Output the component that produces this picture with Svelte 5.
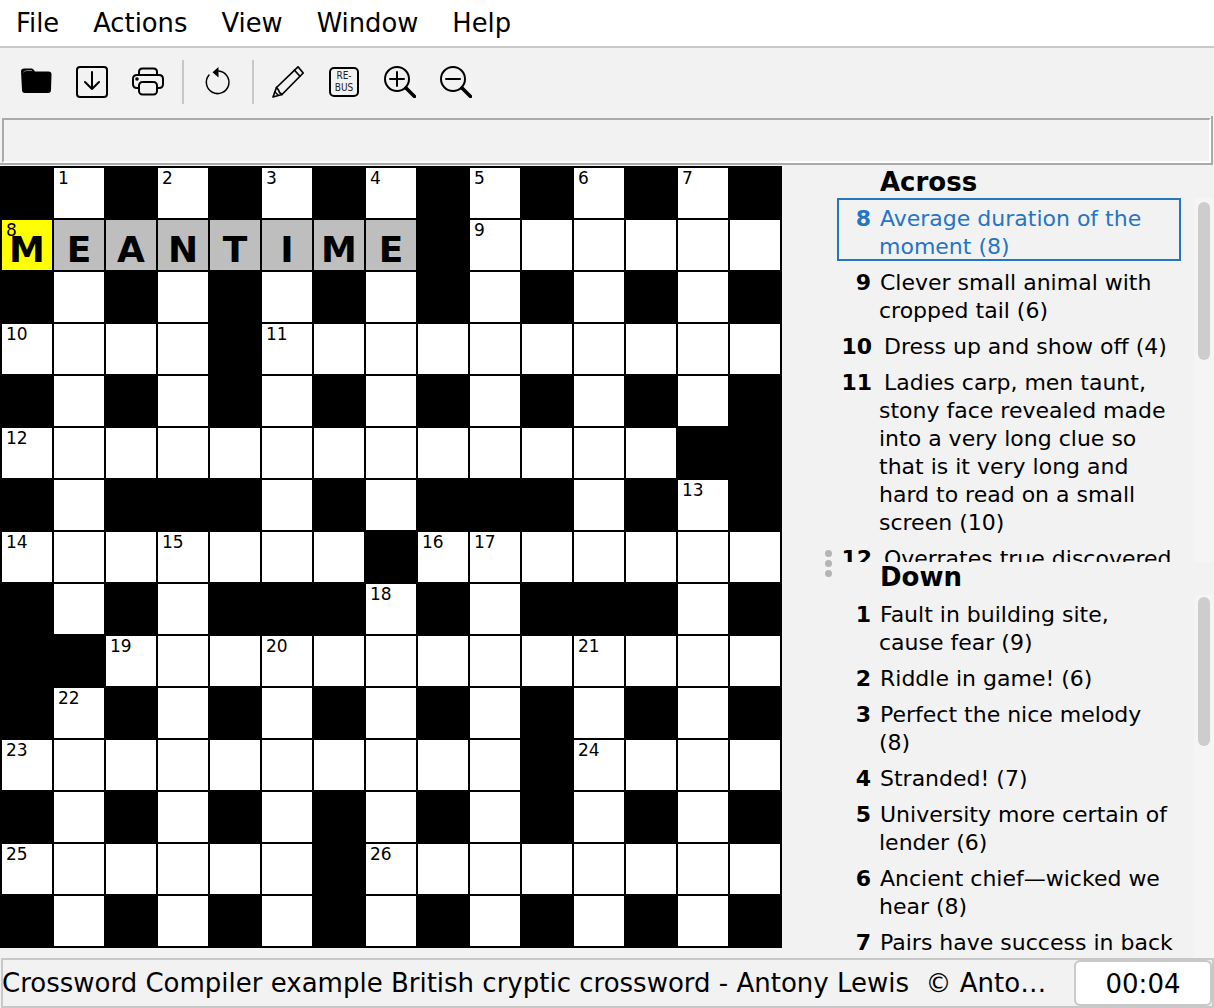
<script>
  const layout = [
    '#.#.#.#.#.#.#.#',
    '........#......',
    '#.#.#.#.#.#.#.#',
    '....#..........',
    '#.#.#.#.#.#.#.#',
    '.............##',
    '#.###.#.###.#.#',
    '.......#.......',
    '#.#.###.#.###.#',
    '##.............',
    '#.#.#.#.#.#.#.#',
    '..........#....',
    '#.#.#.#.#.#.#.#',
    '......#........',
    '#.#.#.#.#.#.#.#'
  ];
  const numbers = {
    '0,1': 1, '0,3': 2, '0,5': 3, '0,7': 4, '0,9': 5, '0,11': 6, '0,13': 7,
    '1,0': 8, '1,9': 9, '3,0': 10, '3,5': 11, '5,0': 12, '6,13': 13,
    '7,0': 14, '7,3': 15, '7,8': 16, '7,9': 17, '8,7': 18, '9,2': 19, '9,5': 20, '9,11': 21,
    '10,1': 22, '11,0': 23, '11,11': 24, '13,0': 25, '13,7': 26
  };
  const answer = 'MEANTIME';
  const cells = layout.flatMap((row, r) =>
    [...row].map((ch, c) => ({
      key: r + '-' + c,
      black: ch === '#',
      num: numbers[r + ',' + c],
      letter: r === 1 && c < 8 ? answer[c] : '',
      current: r === 1 && c === 0,
      word: r === 1 && c > 0 && c < 8
    }))
  );
  const across = [
    [8, 'Average duration of the moment (8)'],
    [9, 'Clever small animal with cropped tail (6)'],
    [10, 'Dress up and show off (4)'],
    [11, 'Ladies carp, men taunt, stony face revealed made into a very long clue so that is it very long and hard to read on a small screen (10)'],
    [12, 'Overrates true discovered in study (9)']
  ];
  const down = [
    [1, 'Fault in building site, cause fear (9)'],
    [2, 'Riddle in game! (6)'],
    [3, 'Perfect the nice melody (8)'],
    [4, 'Stranded! (7)'],
    [5, 'University more certain of lender (6)'],
    [6, 'Ancient chief—wicked we hear (8)'],
    [7, 'Pairs have success in back (5)']
  ];
</script>

<div class="app">
  <nav class="menubar">
    <span>File</span><span>Actions</span><span>View</span><span>Window</span><span>Help</span>
  </nav>

  <div class="toolbar">
    <button aria-label="Open">
      <svg viewBox="0 0 32 32" width="32" height="32"><path d="M1 5.500C1 3.500 2 2.500 4 2.500h7c1.500 0 2.200.6 3 1.600L15 5.500h13.500c2 0 3 1 3 3L31 24c0 2-1 3-3 3H5c-2 0-3-1-3-3z" fill="#000"/><path d="M3.500 6.200C5 4.800 6 4.600 8 4.600h4" stroke="#888" stroke-width="1" fill="none"/></svg>
    </button>
    <button aria-label="Save">
      <svg viewBox="0 0 32 32" width="32" height="32" class="line"><rect x="1" y="1" width="30" height="30" rx="3"/><path d="M16 6v17M9 16l7 7 7-7"/></svg>
    </button>
    <button aria-label="Print">
      <svg viewBox="0 0 32 32" width="32" height="32" class="line"><path d="M7 9V6c0-2 1.500-3.500 3.500-3.500h11C23.500 2.500 25 4 25 6v3"/><path d="M7 22H5c-2.500 0-4-1.500-4-4v-5c0-2.500 1.500-4 4-4h22c2.500 0 4 1.500 4 4v5c0 2.500-1.500 4-4 4h-2"/><rect x="7" y="16" width="18" height="12.500" rx="3.500"/><circle cx="5" cy="13" r=".8" fill="#000"/></svg>
    </button>
    <i class="sep"></i>
    <button aria-label="Undo">
      <svg viewBox="0 0 32 32" width="32" height="32" class="line thin"><path d="M16.500 5a11.300 11.300 0 1 1-9.500 4"/><path d="M16.500 1v10.500L10.500 6.200z" fill="#000" stroke="none"/></svg>
    </button>
    <i class="sep"></i>
    <button aria-label="Pencil">
      <svg viewBox="0 0 32 32" width="32" height="32" class="line slim"><path d="M1 31l3.500-9.500L26 .8 31.200 7 10 28.500z"/><path d="M22.500 4.200l5.500 6M4.500 21.500l2 2.500 1 2.500 2.500 2M3 26l3 3"/></svg>
    </button>
    <button class="rebus" aria-label="Rebus">
      <span>RE-<br />BUS</span>
    </button>
    <button aria-label="Zoom in">
      <svg viewBox="0 0 32 32" width="32" height="32" class="line"><circle cx="13" cy="13" r="12"/><path d="M6 13h14M13 6v14"/><path d="M22 22l8.500 8.500" stroke-width="3.500"/></svg>
    </button>
    <button aria-label="Zoom out">
      <svg viewBox="0 0 32 32" width="32" height="32" class="line"><circle cx="13" cy="13" r="12"/><path d="M6 13h14"/><path d="M22 22l8.500 8.500" stroke-width="3.500"/></svg>
    </button>
  </div>

  <div class="entry"><div class="entry-inner"></div></div>

  <main class="main">
    <div class="grid">
      {#each cells as cell (cell.key)}
        <div class="cell" class:black={cell.black} class:current={cell.current} class:word={cell.word}>
          {#if cell.num}<small>{cell.num}</small>{/if}
          {#if cell.letter}<b>{cell.letter}</b>{/if}
        </div>
      {/each}
    </div>

    <aside class="clues">
      <section class="pane top">
        <h2>Across</h2>
        <div class="list">
          {#each across as [n, text], i}
            <p class="clue" class:active={i === 0}><strong class:wide={n >= 10}>{n}</strong>{text}</p>
          {/each}
        </div>
        <div class="track"><i class="thumb"></i></div>
      </section>
      <div class="grip"><i></i><i></i><i></i></div>
      <section class="pane bottom">
        <h2>Down</h2>
        <div class="list">
          {#each down as [n, text]}
            <p class="clue"><strong class:wide={n >= 10}>{n}</strong>{text}</p>
          {/each}
        </div>
        <div class="track"><i class="thumb"></i></div>
      </section>
    </aside>
  </main>

  <footer class="status">
    <div class="title">Crossword Compiler example British cryptic crossword - Antony Lewis &nbsp;© Antony Lewis 2020</div>
    <div class="timer">00:04</div>
  </footer>
</div>

<style>
  :global(body) { margin: 0; background: #f2f2f2; }
  .app {
    width: 1214px; height: 1008px; overflow: hidden; display: flex; flex-direction: column;
    font-family: "DejaVu Sans", sans-serif; color: #000; background: #f2f2f2;
  }
  .menubar {
    height: 46px; background: #fff; border-bottom: 2px solid #c8c8c8; display: flex; gap: 34px;
    padding-left: 16px; font-size: 25.800px; line-height: 46px; flex: none;
  }
  .toolbar { height: 68px; display: flex; align-items: center; padding-left: 8px; flex: none; }
  button {
    width: 56px; height: 44px; border: 0; padding: 0; background: none; display: flex;
    align-items: center; justify-content: center; font-family: inherit; color: inherit;
  }
  .line { fill: none; stroke: #000; stroke-width: 2; stroke-linecap: round; stroke-linejoin: round; }
  .thin { stroke-width: 1.500; }
  .slim { stroke-width: 1.700; }
  .sep { width: 2px; height: 44px; background: #c8c8c8; margin: 0 6px; }
  .rebus span {
    width: 26px; height: 25px; border: 2px solid #000; border-radius: 5px; display: block;
    font-family: "DejaVu Sans Condensed", "DejaVu Sans", sans-serif;
    font-size: 10px; line-height: 12px; text-align: center; padding-top: 1px; box-sizing: content-box;
    color: #222;
  }
  .entry {
    width: 1213px; height: 49px; box-sizing: border-box; padding: 2px 0 0 2px; flex: none;
    border-right: 2px solid #aaa; border-bottom: 2px solid #aaa;
  }
  .entry-inner {
    height: 100%; box-sizing: border-box;
    border: 2px solid #fff; border-top-color: #aaa; border-left-color: #aaa;
  }
  .main { flex: none; height: 792px; display: flex; align-items: flex-start; margin-top: 1px; }
  .grid {
    width: 782px; height: 782px; box-sizing: border-box; padding: 2px; background: #000; display: grid;
    grid-template-columns: repeat(15, 50px); grid-template-rows: repeat(15, 50px); gap: 2px; flex: none;
  }
  .cell { background: #fff; position: relative; overflow: hidden; }
  .cell.black { background: #000; }
  .cell.current { background: #ff0; }
  .cell.word { background: #bebebe; }
  .cell small { position: absolute; left: 4px; top: 0; font-size: 17px; line-height: 20px; }
  .cell b { position: absolute; inset: 0; text-align: center; font-size: 36px; line-height: 60px; font-weight: 700; }
  .clues { flex: 1; display: flex; flex-direction: column; height: 792px; position: relative; }
  .pane { position: relative; overflow: hidden; font-size: 22px; }
  .pane.top { height: 396px; }
  .pane.bottom { height: 396px; }
  h2 { margin: 0; font-size: 26px; font-weight: 700; line-height: 32px; padding-left: 98px; }
  .bottom h2 { line-height: 30px; }
  .clue {
    margin: 0 33px 8px 55px; padding: 0 6px 0 42px; text-indent: -42px; line-height: 28px;
  }
  .clue strong { display: inline-block; width: 34px; margin-right: 9px; text-align: right; text-indent: 0; font-weight: 700; }
  .clue strong.wide { width: 35px; margin-right: 12px; }
  .clue.active { color: #2675c3; outline: 2px solid #2675c3; outline-offset: -2px; padding-top: 7px; }
  .bottom .list { padding-top: 9px; }
  .track { position: absolute; right: 0; bottom: 0; width: 20px; background: #f5f5f5; display: flex; justify-content: center; }
  .top .track { top: 32px; }
  .bottom .track { top: 33px; }
  .thumb { width: 12px; border-radius: 6px; background: #cdcdcd; }
  .top .thumb { height: 158px; margin-top: 4px; }
  .bottom .thumb { height: 149px; margin-top: 2px; }
  .grip { position: absolute; left: 43px; top: 384px; display: flex; flex-direction: column; gap: 3px; }
  .grip i { width: 7px; height: 7px; border-radius: 50%; background: #b4b4b4; }
  .status {
    flex: none; width: 1213px; margin-left: 1px; height: 50px; box-sizing: border-box; border: 2px solid #c8c8c8; display: flex; align-items: stretch;
  }
  .title {
    flex: 1; min-width: 0; white-space: nowrap; overflow: hidden; text-overflow: ellipsis;
    font-size: 26px; line-height: 46px; padding-right: 14px; text-indent: -1px;
  }
  .timer {
    width: 138px; box-sizing: border-box; border: 2px solid #c8c8c8; border-radius: 6px; background: #fff;
    font-size: 26px; line-height: 44px; text-align: center; flex: none;
  }
</style>
